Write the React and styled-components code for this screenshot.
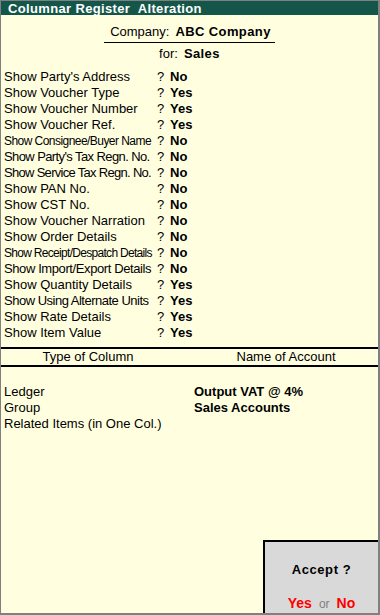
import styled, { createGlobalStyle } from 'styled-components';

const GlobalStyle = createGlobalStyle`
  html, body {
    margin: 0;
    padding: 0;
    background: #ffffe0;
  }
  body {
    font-family: "Liberation Sans", Arial, sans-serif;
    color: #000;
  }
`;

const Frame = styled.div`
  width: 380px;
  height: 615px;
  box-sizing: border-box;
  border-left: 1px solid #808080;
  border-top: 1px solid #808080;
  border-right: 2px solid #808080;
  border-bottom: 2px solid #808080;
  background: #ffffe0;
  display: flex;
  flex-direction: column;
  overflow: hidden;
`;

const TitleBar = styled.div`
  height: 14px;
  background: #14574a;
  color: #fff;
  font-weight: bold;
  font-size: 13px;
  line-height: 15px;
  letter-spacing: 0.35px;
  padding-left: 7px;
  white-space: pre;
`;

const Heading = styled.div`
  display: flex;
  flex-direction: column;
  align-items: center;
  padding-top: 9px;
  font-size: 13px;
  line-height: 16px;
`;

const CompanyLine = styled.div`
  border-bottom: 1px solid #000;
  padding: 0 4px 2px 6px;
`;

const ForLine = styled.div`
  padding-top: 3px;
`;

const Strong = styled.b`
  font-weight: bold;
  letter-spacing: 0.4px;
  margin-left: 6px;
`;

const Options = styled.div`
  padding: 7px 0 0 3px;
  display: grid;
  grid-template-columns: 153px 13px 1fr;
  font-size: 13px;
  line-height: 16px;
`;

const Label = styled.div`
  white-space: nowrap;
  font-size: ${(p) => (p.$condensed ? '12px' : '13px')};
  letter-spacing: ${(p) => p.$spacing || 0}px;
`;

const Mark = styled.div`
  text-align: left;
`;

const Value = styled.div`
  font-weight: bold;
`;

const ColumnHead = styled.div`
  margin-top: 6px;
  border-top: 2px solid #000;
  border-bottom: 2px solid #000;
  display: grid;
  grid-template-columns: 174px 19px 1fr;
  font-size: 13px;
  line-height: 14px;
  padding: 1px 0;
`;

const HeadCell = styled.div`
  text-align: center;
  grid-column: ${(p) => p.$col};
`;

const Entries = styled.div`
  padding: 17px 0 0 3px;
  display: grid;
  grid-template-columns: 190px 1fr;
  font-size: 13px;
  line-height: 16px;
`;

const EntryValue = styled.div`
  font-weight: bold;
`;

const Accept = styled.div`
  margin-top: auto;
  align-self: flex-end;
  width: 115px;
  height: 73px;
  box-sizing: border-box;
  border-left: 2px solid #000;
  border-top: 2px solid #000;
  background: #d9d9d9;
  display: flex;
  flex-direction: column;
  align-items: center;
`;

const AcceptTitle = styled.div`
  margin-top: 20px;
  font-size: 13px;
  font-weight: bold;
  letter-spacing: 0.6px;
`;

const Choices = styled.div`
  margin-top: auto;
  margin-bottom: 2px;
  font-size: 13px;
  display: flex;
  gap: 7px;
  align-items: baseline;
`;

const Choice = styled.span`
  color: ${(p) => (p.$key ? '#ff0000' : '#808080')};
  font-weight: ${(p) => (p.$key ? 'bold' : 'normal')};
  font-size: ${(p) => (p.$key ? '14px' : '12px')};
`;

const options = [
  ["Show Party's Address", 'No'],
  ['Show Voucher Type', 'Yes'],
  ['Show Voucher Number', 'Yes'],
  ['Show Voucher Ref.', 'Yes'],
  ['Show Consignee/Buyer Name', 'No', true, -0.55],
  ["Show Party's Tax Regn. No.", 'No', false, -0.6],
  ['Show Service Tax Regn. No.', 'No', false, -0.7],
  ['Show PAN No.', 'No'],
  ['Show CST No.', 'No'],
  ['Show Voucher Narration', 'No'],
  ['Show Order Details', 'No'],
  ['Show Receipt/Despatch Details', 'No', true, -0.7],
  ['Show Import/Export Details', 'No', false, -0.4],
  ['Show Quantity Details', 'Yes'],
  ['Show Using Alternate Units', 'Yes', false, -0.5],
  ['Show Rate Details', 'Yes'],
  ['Show Item Value', 'Yes'],
];

const entries = [
  ['Ledger', 'Output VAT @ 4%'],
  ['Group', 'Sales Accounts'],
  ['Related Items (in One Col.)', ''],
];

export default function App() {
  return (
    <>
      <GlobalStyle />
      <Frame>
        <TitleBar>{'Columnar Register  Alteration'}</TitleBar>
        <Heading>
          <CompanyLine>
            Company:<Strong>ABC Company</Strong>
          </CompanyLine>
          <ForLine>
            for:<Strong>Sales</Strong>
          </ForLine>
        </Heading>
        <Options>
          {options.map(([label, value, condensed, spacing]) => (
            <>
              <Label key={label} $condensed={condensed} $spacing={spacing}>
                {label}
              </Label>
              <Mark>?</Mark>
              <Value>{value}</Value>
            </>
          ))}
        </Options>
        <ColumnHead>
          <HeadCell $col={1}>Type of Column</HeadCell>
          <HeadCell $col={3}>Name of Account</HeadCell>
        </ColumnHead>
        <Entries>
          {entries.map(([type, name]) => (
            <>
              <div key={type}>{type}</div>
              <EntryValue>{name}</EntryValue>
            </>
          ))}
        </Entries>
        <Accept>
          <AcceptTitle>Accept ?</AcceptTitle>
          <Choices>
            <Choice $key>Yes</Choice>
            <Choice>or</Choice>
            <Choice $key>No</Choice>
          </Choices>
        </Accept>
      </Frame>
    </>
  );
}
